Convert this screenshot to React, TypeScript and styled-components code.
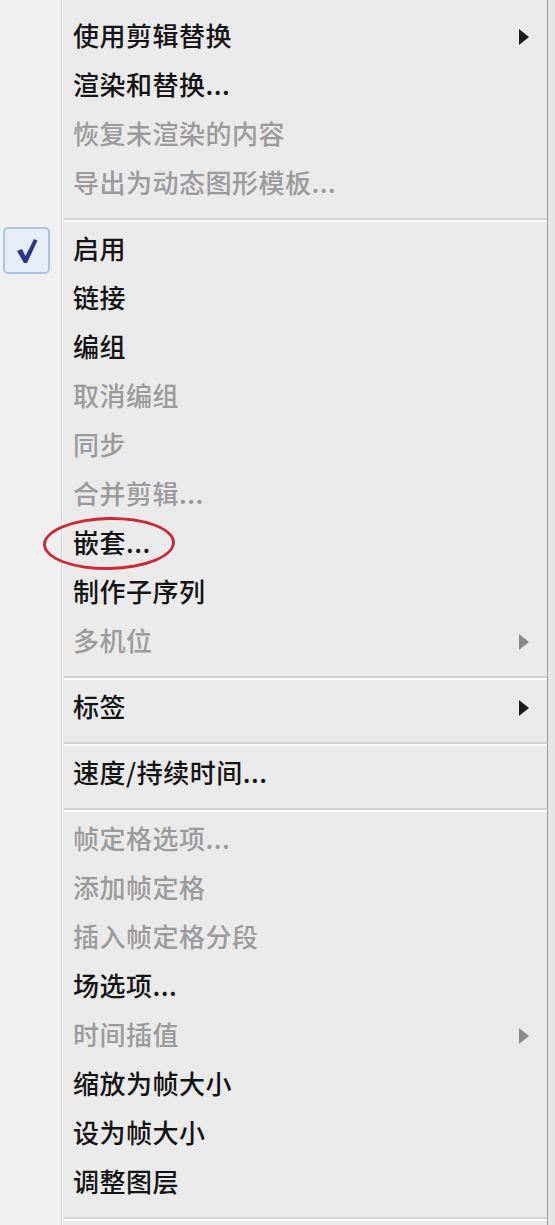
import styled, { createGlobalStyle } from 'styled-components'

type Item = {
  label: string
  disabled?: boolean
  submenu?: boolean
  checked?: boolean
  circled?: boolean
}

type Entry = Item | 'sep'

const entries: Entry[] = [
  { label: '使用剪辑替换', submenu: true },
  { label: '渲染和替换...' },
  { label: '恢复未渲染的内容', disabled: true },
  { label: '导出为动态图形模板...', disabled: true },
  'sep',
  { label: '启用', checked: true },
  { label: '链接' },
  { label: '编组' },
  { label: '取消编组', disabled: true },
  { label: '同步', disabled: true },
  { label: '合并剪辑...', disabled: true },
  { label: '嵌套...', circled: true },
  { label: '制作子序列' },
  { label: '多机位', disabled: true, submenu: true },
  'sep',
  { label: '标签', submenu: true },
  'sep',
  { label: '速度/持续时间...' },
  'sep',
  { label: '帧定格选项...', disabled: true },
  { label: '添加帧定格', disabled: true },
  { label: '插入帧定格分段', disabled: true },
  { label: '场选项...' },
  { label: '时间插值', disabled: true, submenu: true },
  { label: '缩放为帧大小' },
  { label: '设为帧大小' },
  { label: '调整图层' },
  'sep',
]

const GlobalStyle = createGlobalStyle`
  html, body {
    margin: 0;
    padding: 0;
    background: #e6e6e6;
  }
  body {
    font-family: "Noto Sans CJK SC", "Noto Sans", sans-serif;
  }
`

const Menu = styled.div`
  width: 548px;
  height: 1225px;
  box-sizing: border-box;
  padding-top: 14px;
  border-right: 1px solid #9c9c9c;
  display: flex;
  flex-direction: column;
  overflow: hidden;
  background: linear-gradient(
    to right,
    #f0f0f0 0 61px,
    #d6d6d6 61px 62px,
    #fafafa 62px 63px,
    #eaeaea 63px
  );
`

const Row = styled.div<{ disabled?: boolean }>`
  position: relative;
  height: 49px;
  box-sizing: border-box;
  flex-shrink: 0;
  display: flex;
  align-items: center;
  padding: 0 18px 7px 73px;
  font-size: 26px;
  font-weight: 500;
  letter-spacing: 0.5px;
  color: ${props => (props.disabled ? '#9b9b9b' : '#141414')};
`

const Label = styled.span`
  flex: 1;
  line-height: 1;
`

const Separator = styled.div`
  height: 17px;
  flex-shrink: 0;
  margin-left: 64px;
  display: flex;
  flex-direction: column;
  justify-content: center;
  padding-top: 2px;
  box-sizing: border-box;

  &::before {
    content: '';
    display: block;
    height: 2px;
    background: #d3d3d3;
  }
  &::after {
    content: '';
    display: block;
    height: 2px;
    background: #fbfbfb;
  }
`

const CheckBox = styled.div`
  position: absolute;
  left: 3px;
  top: 0;
  width: 47px;
  height: 47px;
  box-sizing: border-box;
  border: 2px solid #aac3e6;
  border-radius: 5px;
  background: #e6edf7;
  display: flex;
  align-items: center;
  justify-content: center;
`

const Arrow = styled.span<{ disabled?: boolean }>`
  width: 0;
  height: 0;
  margin-top: 3px;
  border-top: 8px solid transparent;
  border-bottom: 8px solid transparent;
  border-left: 10px solid ${props => (props.disabled ? '#8a8a8a' : '#1c1c1c')};
`

const Ring = styled.div`
  position: absolute;
  left: 43px;
  top: -4px;
  width: 132px;
  height: 53px;
  box-sizing: border-box;
  border: 3px solid #c92a33;
  border-radius: 50%;
  transform: rotate(-1deg);
  pointer-events: none;
`

function Check() {
  return (
    <svg width="22" height="26" viewBox="0 0 22 26">
      <path
        d="M1 13 L6 11 L9.5 18 L18 1 L21.5 2.5 L11 25 L8 25 Z"
        fill="#2a3590"
      />
    </svg>
  )
}

function MenuRow({ item }: { item: Item }) {
  return (
    <Row disabled={item.disabled}>
      {item.checked && (
        <CheckBox>
          <Check />
        </CheckBox>
      )}
      <Label>{item.label}</Label>
      {item.submenu && <Arrow disabled={item.disabled} />}
      {item.circled && <Ring />}
    </Row>
  )
}

export default function App() {
  return (
    <>
      <GlobalStyle />
      <Menu>
        {entries.map((e, i) =>
          e === 'sep' ? <Separator key={i} /> : <MenuRow key={i} item={e} />
        )}
      </Menu>
    </>
  )
}
